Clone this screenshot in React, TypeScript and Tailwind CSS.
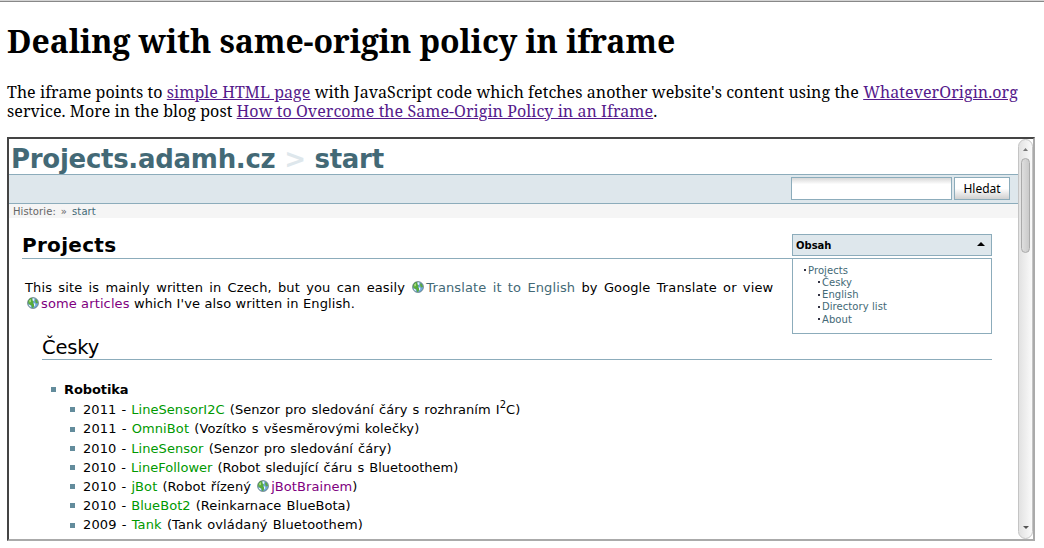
import type { ReactNode } from "react";

function Globe() {
  return (
    <svg viewBox="0 0 12 12" className="ml-[1px] mr-[2px] inline-block h-3 w-3 align-[-1px]">
      <circle cx="6" cy="6" r="5.5" fill="#6fa9d8" />
      <path d="M1 4 3 1.3 5.5 1 5.2 3 6.5 4.5 6 6.5 7.5 8 6.5 10.5 5 11 4.5 8.5 1.5 7Z" fill="#5aab3a" />
      <path d="M2 3.5 4 2 4 5 2.5 5.5Z" fill="#a5d97c" />
      <path d="M5.5 1.3 7.5 1.5 7 4 5.8 3.5ZM1.5 7.5 3.5 8.2 4 10.5 2.5 9.5ZM7 6 8.3 7 8 9.5 7 8.5Z" fill="#eef7fc" />
      <path d="M8 2 10 3.3 11 6 9.3 6.5 8.3 5Z" fill="#5ba83f" />
      <circle cx="6" cy="6" r="5.5" fill="none" stroke="#46594f" strokeOpacity=".75" strokeWidth=".7" />
    </svg>
  );
}

function Item({ year, name, spacing, children }: { year: string; name: string; spacing: string; children: ReactNode }) {
  return (
    <li className="flex h-[19.2px] items-center whitespace-pre [word-spacing:0.9px]">
      <span className="mr-2 h-[5px] w-[5px] bg-[#638c9c]" />
      <span className={spacing}>
        {year} - <a className="text-[#009900]">{name}</a> {children}
      </span>
    </li>
  );
}

const toc = ["Česky", "English", "Directory list", "About"];

export default function App() {
  return (
    <div className="h-[548px] w-[1044px] overflow-hidden border-t border-[#d4d4d4] bg-white font-['Noto_Serif','Droid_Serif','DejaVu_Serif_Condensed','DejaVu_Serif',serif] text-black">
      <div className="h-px bg-[#888]" />
      <div className="pl-[7px]">
        <h1 className="h-[81px] whitespace-nowrap pt-[19px] text-[32px] font-bold leading-[40px] tracking-[-0.075px]">Dealing with same-origin policy in iframe</h1>
        <div className="h-[54px] whitespace-nowrap text-[16px] leading-[19px]">
          <p className="tracking-[0.068px]">
            The iframe points to <a className="text-[#551a8b] underline">simple HTML page</a> with JavaScript code which fetches another website's content using the <a className="text-[#551a8b] underline">WhateverOrigin.org</a>
          </p>
          <p className="tracking-[0.06px]">
            service. More in the blog post <a className="text-[#551a8b] underline">How to Overcome the Same-Origin Policy in an Iframe</a>.
          </p>
        </div>
        <div className="flex h-[404px] w-[1028px] overflow-hidden border-2 border-b-[#aaa] border-l-[#444] border-r-[#aaa] border-t-[#444] font-['Verdana','DejaVu_Sans',sans-serif] text-[13px]">
          <main className="w-[1009px] shrink-0">
            <header className="h-[35px] whitespace-nowrap pl-[2px] text-[26px] font-bold leading-[40px] tracking-[-0.28px] text-[#436976]">
              Projects.adamh.cz <span className="text-[#dee7ec]">&gt;</span> start
            </header>
            <div className="flex h-[30px] items-start justify-end gap-[2px] border-y border-[#8cacbb] bg-[#dee7ec] pr-[8px] pt-[2px]">
              <div className="h-[23px] w-[161px] border border-[#8cacbb] bg-linear-to-b from-[#d8d8d8] to-white to-30%" />
              <button className="h-[23px] w-[56px] border border-[#8cacbb] bg-linear-to-b from-white from-50% to-[#d0d0d0] font-['Noto_Sans',sans-serif] text-[12px] leading-[21px]">Hledat</button>
            </div>
            <div className="h-[14px] bg-[#f5f5f5] pl-1 text-[10px] leading-[16px] tracking-[0.1px] text-[#666] [word-spacing:1.7px]">
              Historie: » <a className="text-[#436976]">start</a>
            </div>
            <div className="flex pl-[13px] pt-4">
              <div className="w-[770px]">
                <h2 className="h-[25px] border-b border-[#8cacbb] text-[20px] font-bold leading-[23px] tracking-[0.3px]">Projects</h2>
                <div className="whitespace-nowrap pl-[3px] pt-[21px] leading-[16px] tracking-[0.12px]">
                  <p className="[word-spacing:2px]">
                    This site is mainly written in Czech, but you can easily <Globe /><a className="text-[#436976]">Translate it to English</a> by Google Translate or view
                  </p>
                  <p className="pl-px">
                    <Globe /><a className="text-[#800080]">some articles</a> which I've also written in English.
                  </p>
                </div>
              </div>
              <aside className="h-[100px] w-[200px] text-[10px]">
                <div className="mb-[2px] flex h-[22px] items-center justify-between border border-[#8cacbb] bg-[#dee7ec] pl-[3px] pr-[6px] font-bold">
                  <span>Obsah</span>
                  <svg className="mb-[2px] h-[4px] w-[8px]" viewBox="0 0 8 4"><path d="M0 4 4 0 8 4Z" /></svg>
                </div>
                <div className="h-[76px] border border-[#8cacbb] pt-[5.4px] tracking-[0.07px] text-[#436976]">
                  <div className="flex h-3 items-center pl-[11px]"><i className="mr-[2px] h-[2px] w-[2px] bg-[#334]" />Projects</div>
                  {toc.map((name) => (
                    <div key={name} className="flex h-[12.2px] items-center pl-[25px]"><i className="mr-[2px] h-[2px] w-[2px] bg-[#334]" />{name}</div>
                  ))}
                </div>
              </aside>
            </div>
            <h3 className="ml-[33px] mr-[26px] h-[26px] border-b border-[#8cacbb] text-[19.5px] leading-[28px] tracking-[-0.15px]">Česky</h3>
            <ul className="pl-[42px] pt-[19.8px]">
              <li className="mb-[0.5px] flex h-[20px] items-center font-bold tracking-[-0.1px]"><span className="mr-2 h-[5px] w-[5px] bg-[#638c9c]" />Robotika</li>
              <ul className="pl-[19px]">
                <Item year="2011" name="LineSensorI2C" spacing="tracking-[0.05px]">(Senzor pro sledování čáry s rozhraním I<sup className="relative top-[-6px] align-baseline font-['DejaVu_Sans_Condensed','DejaVu_Sans'] text-[11px] leading-none">2</sup>C)</Item>
                <Item year="2011" name="OmniBot" spacing="tracking-[0.11px]">(Vozítko s všesměrovými kolečky)</Item>
                <Item year="2010" name="LineSensor" spacing="tracking-[0.06px]">(Senzor pro sledování čáry)</Item>
                <Item year="2010" name="LineFollower" spacing="tracking-[0.02px]">(Robot sledující čáru s Bluetoothem)</Item>
                <Item year="2010" name="jBot" spacing="tracking-[0.08px]">(Robot řízený <Globe /><a className="text-[#800080]">jBotBrainem</a>)</Item>
                <Item year="2010" name="BlueBot2" spacing="tracking-[0.05px]">(Reinkarnace BlueBota)</Item>
                <Item year="2009" name="Tank" spacing="tracking-[0.12px]">(Tank ovládaný Bluetoothem)</Item>
                <li className="flex h-5 pl-[199px] pt-[4px]">
                  <i className="mr-[29px] h-px w-[2px] bg-[#888]" />
                  <i className="mr-[111px] h-px w-[2px] bg-[#888]" />
                  <i className="mr-[14px] h-px w-[2px] bg-[#888]" />
                  <i className="mr-[134px] h-px w-[2px] bg-[#888]" />
                  <i className="mr-[73px] h-px w-[2px] bg-[#888]" />
                  <i className="mr-[2px] h-px w-px bg-[#888]" />
                  <i className="h-px w-px bg-[#888]" />
                </li>
              </ul>
            </ul>
          </main>
          <div className="flex h-[400px] w-[15px] flex-col items-center rounded-full border border-[#c4c4c4] bg-linear-to-r from-[#e2e2e2] to-[#fafafa] pt-[8px]">
            <svg className="h-[3px] w-[5px] shrink-0" viewBox="0 0 5 3"><path d="M0 3 2.5 0 5 3Z" fill="#777" /></svg>
            <div className="mt-[7px] h-[95px] w-[9px] rounded-full border border-[#aaa] bg-linear-to-r from-[#dedede] to-[#cacaca]" />
            <svg className="mt-auto mb-[9px] h-[3px] w-[6px] shrink-0" viewBox="0 0 6 3"><path d="M0 0H6L3 3Z" fill="#555" /></svg>
          </div>
        </div>
      </div>
    </div>
  );
}
